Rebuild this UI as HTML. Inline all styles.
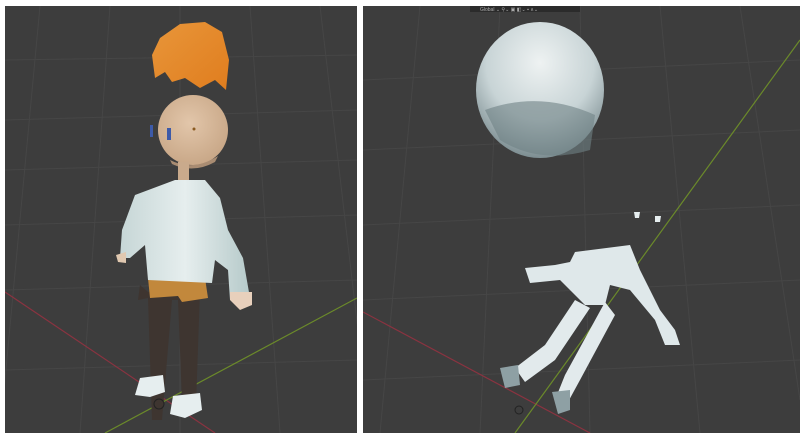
<!DOCTYPE html>
<html><head><style>
html,body{margin:0;padding:0;background:#fff;width:805px;height:438px;overflow:hidden}
svg{display:block}
</style></head><body>
<svg width="805" height="438" viewBox="0 0 805 438" xmlns="http://www.w3.org/2000/svg">
<rect width="805" height="438" fill="#fff"/>
<defs>
<clipPath id="L"><rect x="5" y="6" width="352" height="427"/></clipPath>
<clipPath id="R"><rect x="363" y="6" width="437" height="427"/></clipPath>
<linearGradient id="hair" x1="0" y1="0" x2="1" y2="1"><stop offset="0" stop-color="#e8963a"/><stop offset="1" stop-color="#e07d1e"/></linearGradient>
<radialGradient id="skin" cx="0.45" cy="0.4" r="0.6"><stop offset="0" stop-color="#e2c6aa"/><stop offset="1" stop-color="#c9a888"/></radialGradient>
<linearGradient id="shirt" x1="0" y1="0" x2="1" y2="0"><stop offset="0" stop-color="#c6d6d6"/><stop offset="0.5" stop-color="#e6eeee"/><stop offset="1" stop-color="#b6caca"/></linearGradient>
<radialGradient id="ghead" cx="0.5" cy="0.3" r="0.7"><stop offset="0" stop-color="#eef2f2"/><stop offset="0.6" stop-color="#c8d4d6"/><stop offset="1" stop-color="#7d8e92"/></radialGradient>
</defs>
<g clip-path="url(#L)">
<rect x="5" y="6" width="352" height="427" fill="#3d3d3d"/>
<g stroke="#464646" stroke-width="1" fill="none">
<path d="M5 120 L357 110 M5 170 L357 160 M5 225 L357 215 M5 290 L357 280 M5 370 L357 360 M5 60 L357 55"/>
<path d="M40 6 L0 433 M110 6 L80 433 M180 6 L180 433 M250 6 L280 433 M320 6 L370 433"/>
</g>
<line x1="5" y1="292" x2="215" y2="433" stroke="#8a3340" stroke-width="1.2"/>
<line x1="357" y1="298" x2="105" y2="433" stroke="#6b8a2a" stroke-width="1.2"/>
<path d="M160 38 L180 24 L205 22 L222 32 L229 60 L226 90 L215 80 L200 88 L185 78 L172 82 L165 72 L155 78 L152 55 Z" fill="url(#hair)"/>
<circle cx="193" cy="130" r="35" fill="url(#skin)"/>
<path d="M170 160 Q193 172 218 156 L215 162 Q193 174 172 164Z" fill="#a98c72"/>
<rect x="150" y="125" width="3" height="12" fill="#3d5aa8"/>
<rect x="167" y="128" width="4" height="12" fill="#3d5aa8"/>
<circle cx="194" cy="129" r="1.5" fill="#8a5a20"/>
<rect x="178" y="162" width="11" height="22" fill="#c9aa8c"/>
<rect x="178" y="180" width="11" height="3" fill="#c8c040"/>
<path d="M148 292 L140 285 L138 300 L148 298 L152 420 L162 420 L172 300 L178 300 L182 400 L196 405 L200 290 Z" fill="#3e3530"/>
<path d="M148 278 L205 278 L208 298 L182 302 L178 296 L150 298 Z" fill="#c2883c"/>
<path d="M175 180 L205 180 L220 198 L228 230 L243 258 L250 298 L230 300 L228 270 L215 260 L212 283 L148 280 L145 245 L130 258 L120 258 L122 230 L135 195 Z" fill="url(#shirt)"/>
<path d="M230 292 L252 292 L252 305 L240 310 L230 300Z" fill="#e8d0bc"/>
<path d="M116 255 L126 252 L126 263 L118 262Z" fill="#e0c8b0"/>
<path d="M140 378 L163 375 L165 392 L150 397 L135 395Z" fill="#e6eeef"/>
<path d="M173 396 L200 393 L202 410 L185 418 L170 414Z" fill="#e6eeef"/>
<circle cx="159" cy="404" r="5" fill="none" stroke="#222" stroke-width="1"/>
</g>
<g clip-path="url(#R)">
<rect x="363" y="6" width="437" height="427" fill="#3d3d3d"/>
<g stroke="#464646" stroke-width="1" fill="none">
<path d="M363 80 L800 60 M363 150 L800 130 M363 225 L800 205 M363 300 L800 280 M363 380 L800 360"/>
<path d="M420 6 L380 433 M500 6 L480 433 M580 6 L590 433 M660 6 L700 433 M740 6 L800 400"/>
</g>
<line x1="363" y1="312" x2="590" y2="433" stroke="#8a3340" stroke-width="1.2"/>
<line x1="800" y1="40" x2="515" y2="433" stroke="#6b8a2a" stroke-width="1.2"/>
<rect x="470" y="5" width="110" height="7" fill="#2b2b2b"/>
<text x="480" y="11" font-family="Liberation Sans, sans-serif" font-size="5" fill="#aaa">Global ⌄  ⚲⌄ ▣ ◧⌄ ▪ ∧⌄</text>
<ellipse cx="540" cy="90" rx="64" ry="68" fill="url(#ghead)"/>
<path d="M485 110 Q540 90 595 115 L590 150 Q540 165 500 140Z" fill="#6f8286" opacity="0.6"/>
<path d="M575 252 L630 245 L640 270 L660 310 L675 330 L680 345 L665 345 L655 320 L630 290 L610 285 L605 305 L585 305 L570 290 L560 280 L530 283 L525 268 L555 265 L570 262Z" fill="#dfe8ea"/>
<path d="M575 300 L590 308 L555 360 L525 382 L515 368 L545 345Z" fill="#e2eaec"/>
<path d="M605 302 L615 315 L580 380 L568 402 L555 400 L565 375Z" fill="#e2eaec"/>
<path d="M500 368 L518 365 L520 385 L505 388Z" fill="#8ea0a4"/>
<path d="M552 392 L570 390 L570 410 L558 414Z" fill="#8ea0a4"/>
<path d="M634 212 L640 212 L639 218 L635 218Z M655 216 L661 216 L660 222 L655 222Z" fill="#e6eeef"/>
<circle cx="519" cy="410" r="4" fill="none" stroke="#222" stroke-width="1"/>
</g>
</svg>
</body></html>
